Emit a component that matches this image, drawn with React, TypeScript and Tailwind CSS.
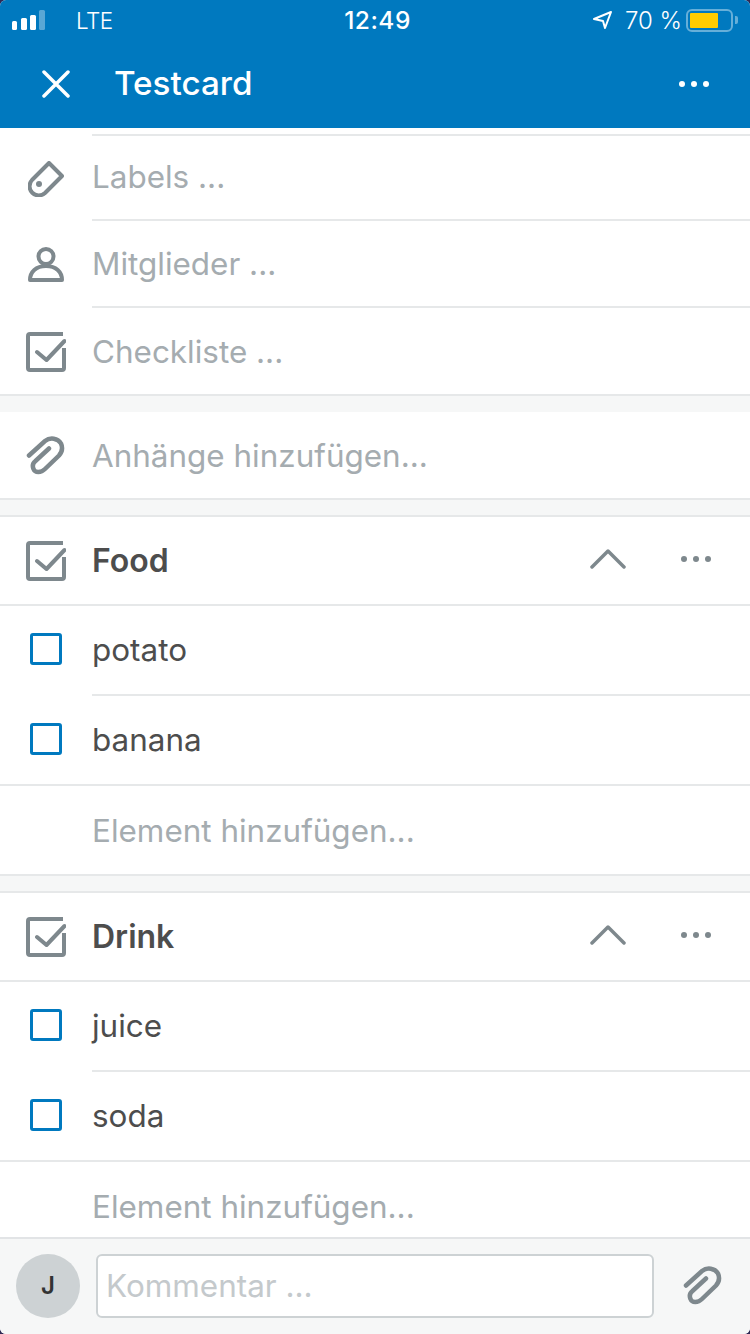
import React from "react";

const font = { fontFamily: "Inter, 'Liberation Sans', sans-serif" };
const ICON = "#7e888d";
const LINE = "border-[#e6e8e9]";

const Tag = () => (
  <svg width="36" height="36" viewBox="0 0 36 36" fill="none" stroke={ICON} strokeWidth="4" strokeLinejoin="round">
    <path d="M21 2 L34 15 L17 32 A9.200 9.200 0 0 1 4 19 Z" />
    <circle cx="11" cy="23" r="3" fill={ICON} stroke="none" />
  </svg>
);

const Person = () => (
  <svg width="36" height="36" viewBox="0 0 36 36" fill="none" stroke={ICON} strokeWidth="4" strokeLinejoin="round">
    <path d="M2 33 C2 25 8 19 18 19 C28 19 34 25 34 33 Z" fill="white" />
    <circle cx="18" cy="9.500" r="7.500" fill="white" />
  </svg>
);

const CheckBox = () => (
  <svg width="40" height="40" viewBox="0 0 40 40" fill="none" stroke={ICON} strokeWidth="4">
    <path d="M37 2 H4 Q2 2 2 4 V36 Q2 38 4 38 H36 Q38 38 38 36 V16" />
    <path d="M11 20 L20.500 28 L38.500 9" strokeLinejoin="round" strokeLinecap="round" strokeWidth="4" />
  </svg>
);

const Clip = () => (
  <svg width="40" height="40" viewBox="0 0 40 40" fill="none" stroke={ICON} strokeWidth="4.500" strokeLinecap="round">
    <path d="M3 19.500 L19 5 C24 1 32 2 35 7.500 C37 12 36 16 33 19.500 L19 33 C15 37 9 37 7.500 33 C6 29.500 7 27 9.500 25 L23 12.500" />
  </svg>
);

const Dots = ({ color }: { color: string }) => (
  <svg width="30" height="6" viewBox="0 0 30 6" fill={color}>
    <circle cx="3" cy="3" r="3" />
    <circle cx="15" cy="3" r="3" />
    <circle cx="27" cy="3" r="3" />
  </svg>
);

const IconCell = ({ children, pb = "" }: { children?: React.ReactNode; pb?: string }) => (
  <div className={`w-[92px] shrink-0 flex items-center justify-center ${pb}`}>{children}</div>
);

const Field = ({ icon, label, line, h, textPad = "" }: { icon: React.ReactNode; label: string; line?: boolean; h: string; textPad?: string }) => (
  <div className={`flex ${h}`}>
    <IconCell>{icon}</IconCell>
    <div className={`flex-1 flex items-center text-[31.45px] text-[#a5acb0] ${textPad} ${line ? `border-b-2 ${LINE}` : ""}`}>{label}</div>
  </div>
);

const AddItem = ({ border }: { border?: boolean }) => (
  <div className={`flex h-[90px] ${border ? `border-b-2 ${LINE}` : ""}`}>
    <IconCell />
    <div className={`flex-1 flex items-center text-[31.45px] text-[#a5acb0] ${border ? "pt-[4px]" : "pt-[2px]"}`}>Element hinzufügen...</div>
  </div>
);

const ChecklistHead = ({ title }: { title: string }) => (
  <div className={`flex items-center h-[91px] border-y-2 ${LINE}`}>
    <IconCell><CheckBox /></IconCell>
    <div className="flex-1 text-[32px] font-semibold text-[#4d4d4d]">{title}</div>
    <svg className="mr-[55px] mb-[3px]" width="36" height="20" viewBox="0 0 36 20" fill="none" stroke={ICON} strokeWidth="3.500" strokeLinecap="round" strokeLinejoin="round">
      <path d="M2 18 L18 2 L34 18" />
    </svg>
    <div className="mr-[39px] mb-[3px] flex"><Dots color={ICON} /></div>
  </div>
);

const Item = ({ label, line }: { label: string; line?: boolean }) => (
  <div className={`flex h-[90px] ${line ? "" : `border-b-2 ${LINE}`}`}>
    <IconCell pb={line ? "pb-[4px]" : "pb-[2px]"}>
      <div className="w-[32px] h-[32px] border-[3px] border-[#0079bf] rounded-[3px]" />
    </IconCell>
    <div className={`flex-1 flex items-center pt-[2px] text-[31.45px] text-[#4d4d4d] ${line ? `border-b-2 ${LINE}` : ""}`}>{label}</div>
  </div>
);

export default function App() {
  return (
    <div className="w-[750px] h-[1334px] bg-[#2f2a55] overflow-hidden">
      <div className="w-full h-full flex flex-col overflow-hidden bg-white rounded-[6px]" style={font}>
        <div className="bg-[#0079bf] text-white h-[128px] shrink-0 flex flex-col">
          <div className="h-[40px] grid grid-cols-[1fr_auto_1fr] items-center pl-[12px] pr-[12px]">
            <div className="flex items-center">
              <svg width="34" height="21" viewBox="0 0 34 21" fill="white">
                <rect x="0" y="11" width="5" height="9" rx="1.500" />
                <rect x="9" y="8" width="6" height="12" rx="1.500" />
                <rect x="18" y="5" width="6" height="15" rx="1.500" />
                <rect x="27" y="0" width="6" height="20" rx="1.500" opacity="0.35" />
              </svg>
              <span className="ml-[30px] mt-[2px] text-[22.500px] font-light tracking-[-0.5px]">LTE</span>
            </div>
            <span className="text-center ml-[5px] mt-[1px] text-[24.500px] font-medium tracking-[0.5px]">12:49</span>
            <div className="flex items-center justify-end">
              <svg width="20" height="20" viewBox="0 0 20 20" fill="none" stroke="white" strokeWidth="2" strokeLinejoin="round">
                <path d="M1 9 L18 2 L12 18 L10 11 Z" />
              </svg>
              <span className="ml-[12px] mt-[2px] text-[24px] font-light">70 %</span>
              <div className="ml-[4px] w-[47px] h-[23px] border-2 border-[#66afd9] rounded-[6px] p-[2px] flex">
                <div className="w-[28px] bg-[#ffcc00] rounded-[1px]" />
              </div>
              <div className="ml-[2px] w-[3px] h-[8px] bg-[#66afd9] rounded-r-[2px]" />
            </div>
          </div>
          <div className="flex-1 flex items-center">
            <div className="w-[115px] flex items-center pl-[42px]">
              <svg width="28" height="28" viewBox="0 0 28 28" fill="none" stroke="white" strokeWidth="3.500" strokeLinecap="round">
                <path d="M2 2 L26 26 M26 2 L2 26" />
              </svg>
            </div>
            <div className="flex-1 text-[33.200px] font-medium -ml-[1px]">Testcard</div>
            <div className="mr-[41px] flex"><Dots color="white" /></div>
          </div>
        </div>

        <div className="flex-1 overflow-hidden">
          <div className="h-[6px]" />
          <div className={`ml-[92px] border-t-2 ${LINE}`} />
          <Field h="h-[85px]" icon={<Tag />} label="Labels ..." line />
          <Field h="h-[87px]" icon={<Person />} label="Mitglieder ..." line textPad="pt-[2px]" />
          <Field h="h-[86px] pt-[2px]" icon={<CheckBox />} label="Checkliste ..." textPad="pt-[2px]" />
          <div className={`border-t-2 ${LINE}`} />
          <div className="h-[16px] bg-[#f6f7f7]" />
          <Field h="h-[86px] pt-[2px]" icon={<Clip />} label="Anhänge hinzufügen..." textPad="pt-[2px]" />
          <div className={`border-t-2 ${LINE}`} />
          <div className="h-[15px] bg-[#f6f7f7]" />
          <ChecklistHead title="Food" />
          <Item label="potato" line />
          <Item label="banana" />
          <AddItem border />
          <div className="h-[15px] bg-[#f6f7f7]" />
          <ChecklistHead title="Drink" />
          <Item label="juice" line />
          <Item label="soda" />
          <AddItem />
        </div>

        <div className="h-[97px] shrink-0 bg-[#f6f7f7] border-t-2 border-[#e2e4e6] flex items-center pl-[16px] pb-[1px]">
          <div className="w-[64px] h-[64px] shrink-0 rounded-full bg-[#cdd2d4] flex items-center justify-center text-[24px] font-semibold text-[#333]">J</div>
          <div className="ml-[16px] w-[558px] h-[64px] shrink-0 bg-white border-2 border-[#cdd2d4] rounded-[6px] flex items-center pl-[8px] pt-[2px] text-[31.45px] text-[#c4c9cc]">Kommentar ...</div>
          <div className="ml-[29px] flex"><Clip /></div>
        </div>
      </div>
    </div>
  );
}
